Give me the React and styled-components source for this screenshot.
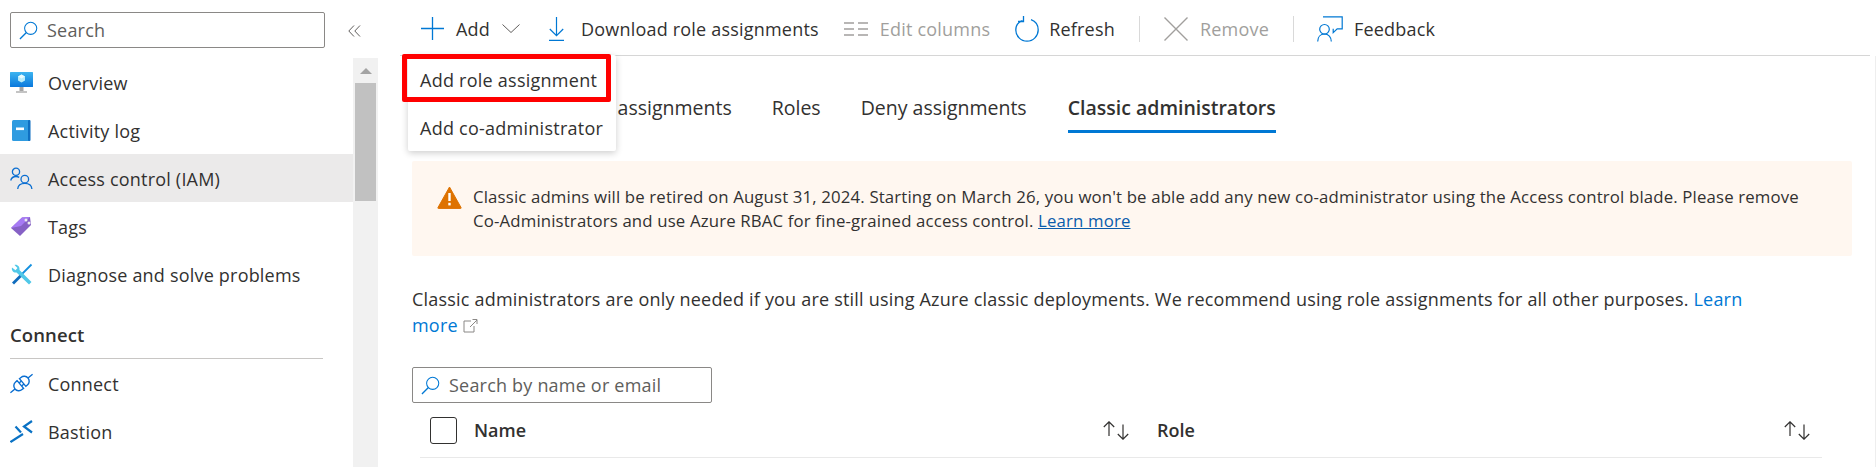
import React from "react";
import styled, { createGlobalStyle } from "styled-components";

const GlobalStyle = createGlobalStyle`
  html, body {
    margin: 0;
    padding: 0;
    background: #fff;
    overflow: hidden;
  }
  body {
    font-family: "Open Sans", "Noto Sans", sans-serif;
    font-size: 18px;
    letter-spacing: 0.2px;
    color: #323130;
  }
`;

const Page = styled.div`
  display: flex;
  width: 1876px;
  height: 467px;
  overflow: hidden;
`;

const Sidebar = styled.aside`
  width: 378px;
  flex: none;
  display: flex;
  flex-direction: column;
`;

const SideTop = styled.div`
  height: 58px;
  flex: none;
  display: flex;
  align-items: flex-start;
  padding: 12px 0 0 10px;
  box-sizing: border-box;
`;

const SearchBox = styled.div`
  width: ${(p) => p.$width}px;
  height: 36px;
  box-sizing: border-box;
  border: 1px solid #8a8886;
  border-radius: 2px;
  display: flex;
  align-items: center;
  gap: 9px;
  padding-left: 8px;
  color: #605e5c;
  flex: none;
`;

const CollapseButton = styled.div`
  margin: 13px 0 0 23px;
  display: flex;
`;

const SideBody = styled.div`
  flex: 1;
  display: flex;
`;

const NavList = styled.nav`
  width: 353px;
  flex: none;
`;

const NavRow = styled.div`
  height: 48px;
  box-sizing: border-box;
  display: flex;
  align-items: center;
  gap: 15px;
  padding: 1px 0 0 10px;
  background: ${(p) => (p.$active ? "#ebeaea" : "transparent")};
`;

const NavHeading = styled.div`
  margin: 25px 30px 0 10px;
  height: 36px;
  box-sizing: border-box;
  line-height: 24px;
  border-bottom: 1px solid #c8c6c4;
  font-size: 18.5px;
  font-weight: 600;
  letter-spacing: 0.1px;
`;

const NavIcon = styled.svg`
  width: 23px;
  height: 23px;
  flex: none;
`;

const ScrollTrack = styled.div`
  width: 25px;
  flex: none;
  background: #f1f1f1;
  display: flex;
  flex-direction: column;
  align-items: center;
`;

const ScrollArrow = styled.div`
  margin-top: 10px;
  border-left: 6px solid transparent;
  border-right: 6px solid transparent;
  border-bottom: 6px solid #a3a3a3;
`;

const ScrollThumb = styled.div`
  margin-top: 9px;
  width: 21px;
  height: 118px;
  background: #c1c1c1;
`;

const Main = styled.main`
  flex: 1;
  min-width: 0;
  margin-left: 22px;
  position: relative;
`;

const Toolbar = styled.div`
  height: 56px;
  margin-right: 6px;
  box-sizing: border-box;
  border-bottom: 1px solid #d6d6d6;
  display: flex;
  align-items: center;
  padding: 2px 0 0 21px;
`;

const ToolButton = styled.div`
  display: flex;
  align-items: center;
  gap: ${(p) => p.$gap}px;
  margin-right: ${(p) => p.$after ?? 0}px;
  white-space: nowrap;
  color: ${(p) => (p.$disabled ? "#a19f9d" : "#323130")};
  svg {
    flex: none;
  }
`;

const ToolDivider = styled.div`
  width: 1px;
  height: 26px;
  background: #d9d9d9;
  margin-right: ${(p) => p.$after}px;
`;

const Dropdown = styled.div`
  position: absolute;
  left: 8px;
  top: 55px;
  width: 208px;
  height: 96px;
  background: #fff;
  box-shadow: 0 2px 7px rgba(0, 0, 0, 0.2);
  border-radius: 2px;
  z-index: 3;
`;

const DropdownItem = styled.div`
  height: 48px;
  box-sizing: border-box;
  display: flex;
  align-items: center;
  padding: 1px 0 0 12px;
  letter-spacing: 0.25px;
  white-space: nowrap;
`;

const Highlight = styled.div`
  position: absolute;
  left: 2px;
  top: 54px;
  width: 209px;
  height: 48px;
  box-sizing: border-box;
  border: 5px solid #ff0000;
  border-radius: 2px;
  z-index: 4;
`;

const Content = styled.div`
  padding-left: 12px;
  height: 411px;
  border-right: 1px solid #eeeeee;
`;

const Tabs = styled.div`
  display: flex;
  gap: 40px;
  height: 77px;
  box-sizing: border-box;
  padding: 39px 0 0 2px;
`;

const Tab = styled.div`
  height: 38px;
  box-sizing: border-box;
  margin-left: ${(p) => (p.$active ? "1px" : "0")};
  border-bottom: ${(p) => (p.$active ? "3px solid #0078d4" : "none")};
  font-size: 19.5px;
  font-weight: ${(p) => (p.$active ? 600 : 400)};
  letter-spacing: 0;
  line-height: 26px;
  white-space: nowrap;
`;

const Banner = styled.div`
  width: 1440px;
  height: 95px;
  box-sizing: border-box;
  margin-top: 28px;
  background: #fff7f0;
  border-radius: 2px;
  display: flex;
  padding: 25px 0 0 25px;
  gap: 11px;
`;

const BannerText = styled.div`
  width: 1342px;
  font-size: 16.8px;
  line-height: 24px;
  letter-spacing: 0.15px;
  margin-top: -1px;
`;

const BannerLink = styled.a`
  color: #0b5cab;
  text-decoration: underline;
`;

const Intro = styled.p`
  margin: 30px 0 0;
  width: 1345px;
  line-height: 26px;
`;

const TextLink = styled.a`
  color: #0078d4;
`;

const ExternalIcon = styled.svg`
  width: 15px;
  height: 15px;
  margin-left: 5px;
  vertical-align: -1px;
`;

const FilterRow = styled.div`
  margin-top: 29px;
`;

const GridHeader = styled.div`
  height: 55px;
  width: 1402px;
  margin-left: 8px;
  box-sizing: border-box;
  border-bottom: 1px solid #e9e9e9;
  display: flex;
  align-items: center;
  padding: 0 10px 0 10px;
`;

const Checkbox = styled.div`
  width: 27px;
  height: 27px;
  box-sizing: border-box;
  border: 1px solid #323130;
  border-radius: 3px;
  flex: none;
  margin-right: 17px;
`;

const ColumnTitle = styled.div`
  width: ${(p) => p.$width}px;
  flex: none;
  font-weight: 600;
  letter-spacing: 0;
`;

const SortIcon = styled.svg`
  width: 26px;
  height: 19px;
  flex: none;
  margin-right: ${(p) => p.$after}px;
`;

const Magnifier = () => (
  <svg width="19" height="19" viewBox="0 0 20 20" fill="none" stroke="#0078d4" strokeWidth="1.1">
    <circle cx="12.3" cy="7.7" r="6.4" />
    <path d="M7.8 12.2 1 19" strokeWidth="1.4" />
  </svg>
);

const Sort = ({ after }) => (
  <SortIcon $after={after} viewBox="0 0 26 19" fill="none" stroke="#323130" strokeWidth="1.2">
    <path d="M6 15V.8M.8 6 6 .8 11.200 6" />
    <path d="M20 3.500v14.700M14.800 13 20 18.200 25.200 13" />
  </SortIcon>
);

export default function App() {
  return (
    <Page>
      <GlobalStyle />
      <Sidebar>
        <SideTop>
          <SearchBox $width={315}>
            <Magnifier />
            Search
          </SearchBox>
          <CollapseButton>
            <svg width="13" height="12" viewBox="0 0 13 12" fill="none" stroke="#605e5c" strokeWidth="1">
              <path d="M6 .5.800 6 6 11.500M12 .5 6.800 6 12 11.500" />
            </svg>
          </CollapseButton>
        </SideTop>
        <SideBody>
          <NavList>
            <NavRow>
              <NavIcon viewBox="0 0 23 23">
                <defs>
                  <linearGradient id="mon" x1="0" y1="0" x2="0" y2="1">
                    <stop offset="0" stopColor="#3cb4f0" />
                    <stop offset="1" stopColor="#0a78dc" />
                  </linearGradient>
                </defs>
                <rect x="0" y="1" width="23" height="15" rx="0.5" fill="url(#mon)" />
                <path d="M11.500 3.500 15 5.500v4l-3.500 2-3.500-2v-4z" fill="#b8ecfa" />
                <path d="M8 5.500 11.500 7.500 15 5.500 11.500 3.500z" fill="#e8fbff" />
                <rect x="9.500" y="16" width="4" height="4" fill="#a5a5a5" />
                <rect x="6" y="20" width="11" height="2" fill="#c4c4c4" />
              </NavIcon>
              Overview
            </NavRow>
            <NavRow>
              <NavIcon viewBox="0 0 23 23">
                <rect x="2" y="1" width="18" height="21" rx="1.500" fill="#2f9be0" />
                <rect x="18" y="1" width="2.500" height="21" rx="1" fill="#0f6fc2" />
                <rect x="6" y="8.500" width="8" height="2.600" fill="#fff" />
              </NavIcon>
              Activity log
            </NavRow>
            <NavRow $active>
              <NavIcon viewBox="0 0 23 23" fill="none" stroke="#0a6ed1" strokeWidth="1.300">
                <circle cx="6" cy="4.800" r="3.600" />
                <path d="M.7 13.500C1.400 10.800 3.400 9.500 6 9.500c1.200 0 2.300.3 3.200.9" />
                <circle cx="14.800" cy="12.200" r="3.800" />
                <path d="M7.700 22c.3-3.400 3-5.600 7.100-5.600s6.800 2.200 7.100 5.600" />
              </NavIcon>
              Access control (IAM)
            </NavRow>
            <NavRow>
              <NavIcon viewBox="0 0 23 23">
                <path d="M1 13 12 2.500l8-.5 1 8L10 21z" fill="#8661c5" />
                <path d="M1 13 12 2.500l8-.5-9 9z" fill="#a67af4" />
                <circle cx="16" cy="5" r="1.500" fill="#eee" />
                <circle cx="19" cy="8" r="1.500" fill="#eee" />
              </NavIcon>
              Tags
            </NavRow>
            <NavRow>
              <NavIcon viewBox="0 0 23 23">
                <path d="M21.500 1.500 12 11" stroke="#1490df" strokeWidth="1.800" />
                <path d="M2 4.500c-.8 3 1.500 5.500 4.500 5L19 21.500l2.500-2.500L9.500 7c.5-3-2-5.800-5-5l3 3-2 2.200z" fill="#50c8e8" />
                <path d="M9.500 12 2 19.500l2 2 7.500-7.500z" fill="#0f6cbd" />
              </NavIcon>
              Diagnose and solve problems
            </NavRow>
            <NavHeading>Connect</NavHeading>
            <NavRow>
              <NavIcon viewBox="0 0 23 23" fill="none" stroke="#0a6ed1" strokeWidth="1.400">
                <g transform="rotate(-40 11.500 11.500)">
                  <path d="M10 6.500H8a5 5 0 0 0 0 10h2z" />
                  <path d="M13 6.500h2a5 5 0 0 1 0 10h-2z" />
                  <path d="M10 9.500h3M10 13.500h3M-3 11.500h6M20 11.500h6" />
                </g>
              </NavIcon>
              Connect
            </NavRow>
            <NavRow>
              <NavIcon viewBox="0 0 23 23" fill="none" stroke="#0a72c4" strokeWidth="2.200">
                <path d="M.5 22 13 14" />
                <path d="M5.500 6.500 11 12.500" />
                <path d="M22 1 14 6.500l8 6" />
              </NavIcon>
              Bastion
            </NavRow>
          </NavList>
          <ScrollTrack>
            <ScrollArrow />
            <ScrollThumb />
          </ScrollTrack>
        </SideBody>
      </Sidebar>
      <Main>
        <Toolbar>
          <ToolButton $gap={12} $after={29}>
            <svg width="23" height="23" viewBox="0 0 23 23" fill="none" stroke="#0078d4" strokeWidth="1.300">
              <path d="M11.500 0v23M0 11.500h23" />
            </svg>
            Add
            <svg width="18" height="9" viewBox="0 0 18 9" fill="none" stroke="#605e5c" strokeWidth="1">
              <path d="M.5.5 9 8.500 17.500.5" />
            </svg>
          </ToolButton>
          <ToolButton $gap={17} $after={25}>
            <svg width="15" height="24" viewBox="0 0 15 24" fill="none" stroke="#0078d4" strokeWidth="1.200">
              <path d="M7.500 0v18.500M.8 12l6.700 6.700L14.200 12M0 23.400h15" />
            </svg>
            Download role assignments
          </ToolButton>
          <ToolButton $disabled $gap={12} $after={25}>
            <svg width="24" height="14" viewBox="0 0 24 14" fill="none" stroke="#a19f9d" strokeWidth="1.400">
              <path d="M0 1h10M0 7h10M0 13h10M14 1h10M14 7h10M14 13h10" />
            </svg>
            Edit columns
          </ToolButton>
          <ToolButton $gap={10} $after={24}>
            <svg width="24" height="26" viewBox="0 0 24 26" fill="none" stroke="#0078d4" strokeWidth="1.300">
              <path d="M7.500 4.500C3.500 6 .8 9.500.8 14c0 6 5 11.200 11.200 11.200S23.200 20 23.200 14c0-4.800-3-8.800-7.200-10.300" />
              <path d="M8.500 0v5.500H3" />
            </svg>
            Refresh
          </ToolButton>
          <ToolDivider $after={24} />
          <ToolButton $disabled $gap={12} $after={24}>
            <svg width="24" height="24" viewBox="0 0 24 24" fill="none" stroke="#a19f9d" strokeWidth="1.400">
              <path d="M.5.5 23.500 23.500M23.500.5.5 23.500" />
            </svg>
            Remove
          </ToolButton>
          <ToolDivider $after={23} />
          <ToolButton $gap={11}>
            <svg width="26" height="26" viewBox="0 0 26 26" fill="none" stroke="#0078d4" strokeWidth="1.200">
              <path d="M6 .8h19.200v12h-5l-4 3.800v-3.800" />
              <path d="M.7 25.500c0-4.500 2.800-7.500 6.800-7.500s6.800 3 6.800 7.500" />
              <circle cx="7.500" cy="13.300" r="4.800" />
            </svg>
            Feedback
          </ToolButton>
        </Toolbar>
        <Dropdown>
          <DropdownItem>Add role assignment</DropdownItem>
          <DropdownItem>Add co-administrator</DropdownItem>
        </Dropdown>
        <Highlight />
        <Content>
          <Tabs>
            <Tab>Check access</Tab>
            <Tab>Role assignments</Tab>
            <Tab>Roles</Tab>
            <Tab>Deny assignments</Tab>
            <Tab $active>Classic administrators</Tab>
          </Tabs>
          <Banner>
            <svg width="25" height="23" viewBox="0 0 25 23">
              <path d="M12.500 1 24 21.500a.6.6 0 0 1-.5.9H1.500a.6.6 0 0 1-.5-.9z" fill="#de7200" stroke="#de7200" strokeLinejoin="round" />
              <rect x="11.300" y="7" width="2.400" height="8" fill="#fff" />
              <rect x="11.300" y="16.800" width="2.400" height="2.600" fill="#fff" />
            </svg>
            <BannerText>
              Classic admins will be retired on August 31, 2024. Starting on March 26, you won't be able add any new
              co-administrator using the Access control blade. Please remove Co-Administrators and use Azure RBAC for
              fine-grained access control. <BannerLink>Learn more</BannerLink>
            </BannerText>
          </Banner>
          <Intro>
            Classic administrators are only needed if you are still using Azure classic deployments. We recommend using
            role assignments for all other purposes. <TextLink>Learn more</TextLink>
            <ExternalIcon viewBox="0 0 15 15" fill="none" stroke="#8a8886" strokeWidth="1">
              <path d="M8 3H1v11h10V8M7 9l7-7M9.500 1.500H14V6" />
            </ExternalIcon>
          </Intro>
          <FilterRow>
            <SearchBox $width={300}>
              <Magnifier />
              Search by name or email
            </SearchBox>
          </FilterRow>
          <GridHeader>
            <Checkbox />
            <ColumnTitle $width={629}>Name</ColumnTitle>
            <Sort after={28} />
            <ColumnTitle $width={627}>Role</ColumnTitle>
            <Sort after={0} />
          </GridHeader>
        </Content>
      </Main>
    </Page>
  );
}
